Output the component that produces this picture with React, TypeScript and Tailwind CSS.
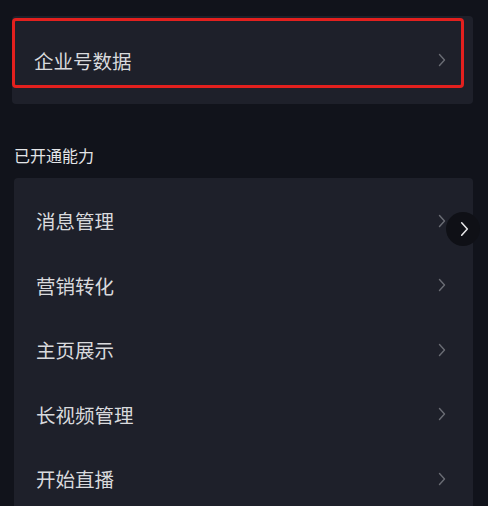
import React from "react";

const Chevron: React.FC<{ className?: string }> = ({ className }) => (
  <svg viewBox="0 0 8 14" className={className} fill="none" stroke="currentColor" strokeWidth={1.4} strokeLinecap="round" strokeLinejoin="round">
    <path d="M1.5 1.5 L6.5 7 L1.5 12.5" />
  </svg>
);

const Row: React.FC<{ label: string }> = ({ label }) => (
  <div className="flex h-[64.5px] items-center justify-between pl-[22px] pr-[27px]">
    <span className="text-[19.5px] text-[#d9dadd]">{label}</span>
    <Chevron className="h-[14px] w-[8px] text-[#6a6c74]" />
  </div>
);

const items = ["消息管理", "营销转化", "主页展示", "长视频管理", "开始直播"];

export default function App() {
  return (
    <div
      className="relative h-[506px] w-[488px] overflow-hidden bg-[#11131b]"
      style={{ fontFamily: '"Noto Sans CJK SC", "Noto Sans", sans-serif' }}
    >
      <div className="pl-[12px] pr-[15px] pt-[16px]">
        {/* 企业号数据 */}
        <div className="relative rounded-[4px] bg-[#1e202a] pt-[12px] pb-[11px]">
          <Row label="企业号数据" />
          <div className="absolute left-0 top-[2px] h-[70px] w-[452px] rounded-[4px] border-[3px] border-[#e3201e]" />
        </div>

        <div className="mt-[40px] pl-[2px] text-[16px] leading-[22px] text-[#e4e5e8]">已开通能力</div>

        <div className="ml-[2px] mt-[12px] rounded-t-[4px] bg-[#1e202a] pt-[11px]">
          {items.map((it) => (
            <Row key={it} label={it} />
          ))}
        </div>
      </div>

      {/* floating button */}
      <div className="absolute left-[446px] top-[212px] flex h-[34px] w-[34px] items-center justify-center rounded-full bg-[#0f1016]">
        <Chevron className="ml-[2px] h-[16px] w-[9px] text-[#e6e6e8]" />
      </div>
    </div>
  );
}
